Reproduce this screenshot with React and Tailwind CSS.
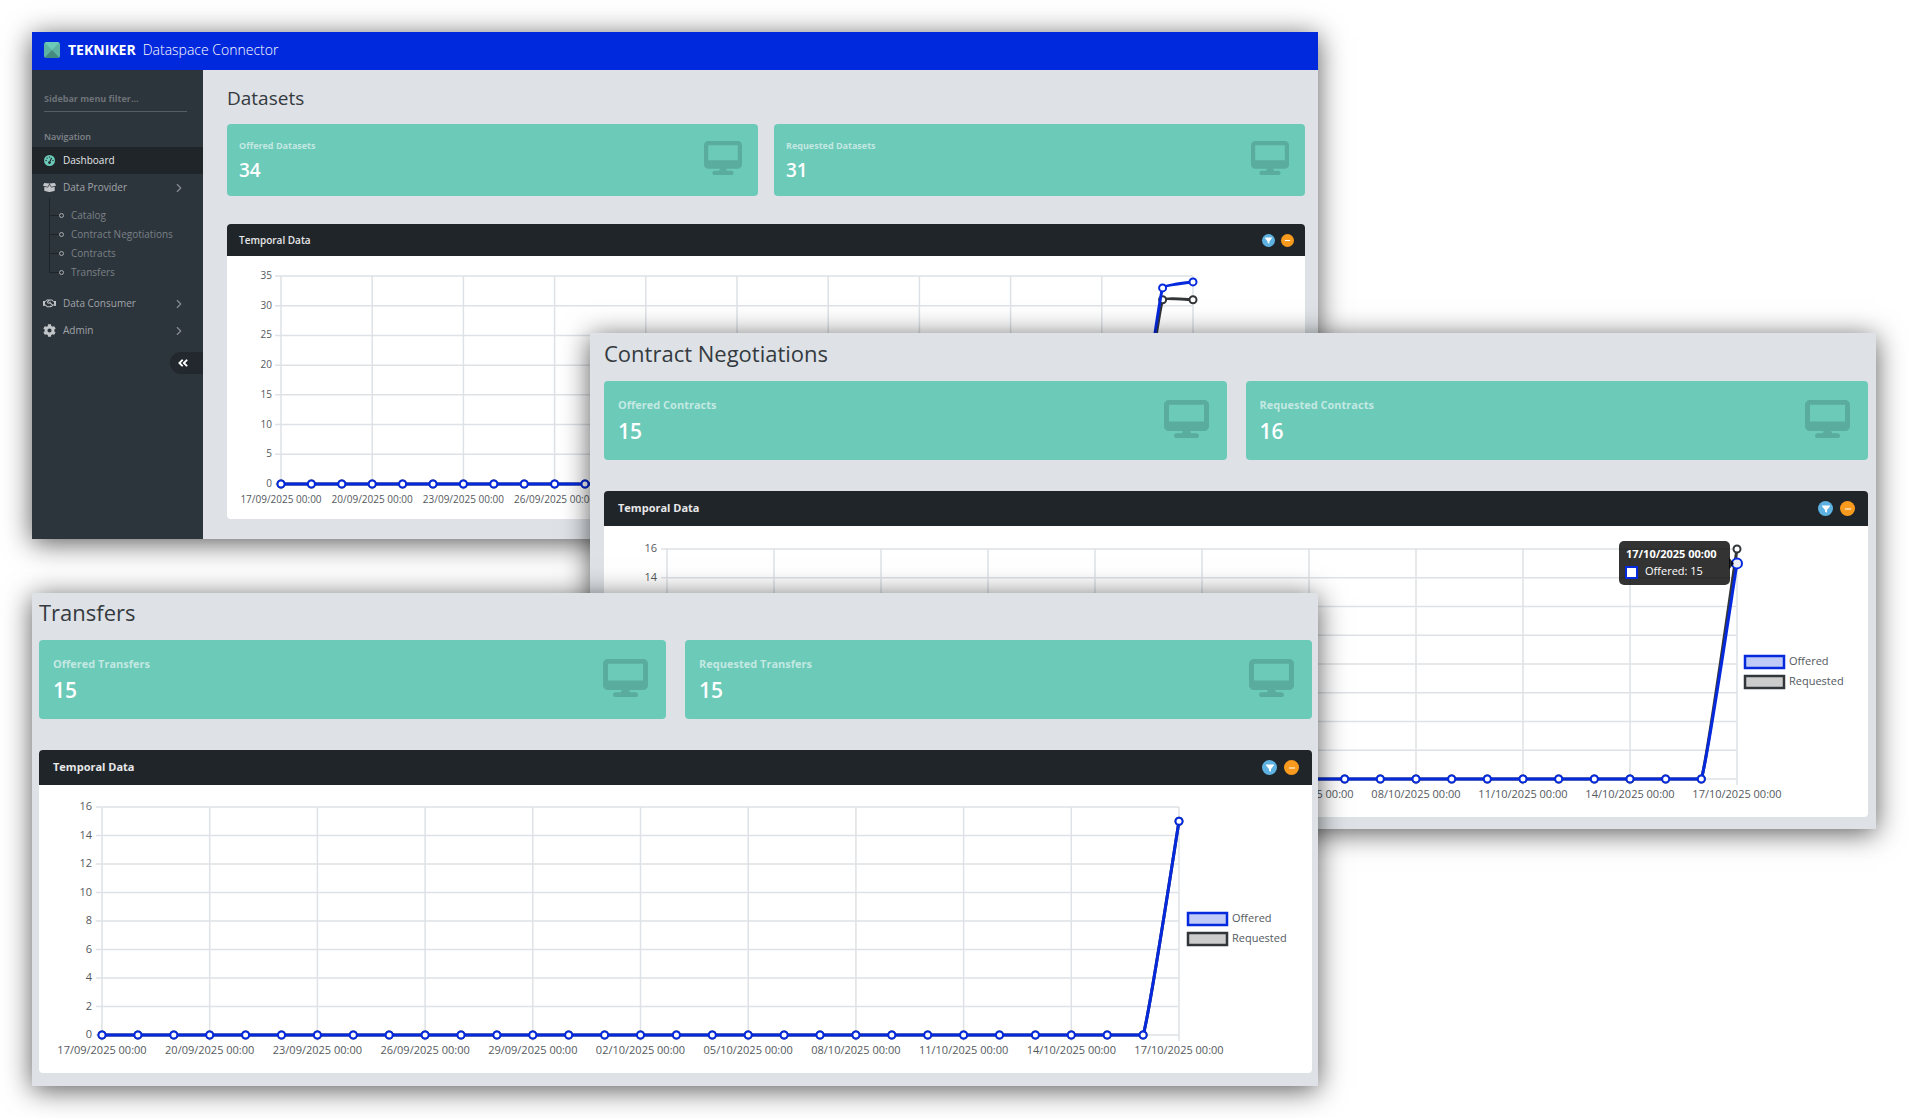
import React from "react";
import { FaCog, FaBoxOpen, FaRegHandshake, FaAngleDoubleLeft } from "react-icons/fa";
import { FaDesktop, FaFilter, FaGaugeHigh, FaMinus } from "react-icons/fa6";
import { ChevronRight } from "lucide-react";

const BLUE = "#0529dd";
const DARK = "#333639";

const DATES = [
  "17/09/2025 00:00",
  "20/09/2025 00:00",
  "23/09/2025 00:00",
  "26/09/2025 00:00",
  "29/09/2025 00:00",
  "02/10/2025 00:00",
  "05/10/2025 00:00",
  "08/10/2025 00:00",
  "11/10/2025 00:00",
  "14/10/2025 00:00",
  "17/10/2025 00:00",
];

const series = (...tail) => [...Array(31 - tail.length).fill(0), ...tail];

/* Smooth path through the points, with control points kept inside the plot. */
function splinePath(points, top, bottom) {
  const clamp = (y) => Math.min(bottom, Math.max(top, y));
  const ctrl = points.map((p, i) => {
    const prev = points[i - 1] || p;
    const next = points[i + 1] || p;
    const d1 = Math.hypot(p.x - prev.x, p.y - prev.y);
    const d2 = Math.hypot(next.x - p.x, next.y - p.y);
    const sum = d1 + d2 || 1;
    const a = (0.1 * d1) / sum;
    const b = (0.1 * d2) / sum;
    return {
      inX: p.x - a * (next.x - prev.x),
      inY: clamp(p.y - a * (next.y - prev.y)),
      outX: p.x + b * (next.x - prev.x),
      outY: clamp(p.y + b * (next.y - prev.y)),
    };
  });
  return points
    .map((p, i) =>
      i === 0
        ? `M${p.x} ${p.y}`
        : `C${ctrl[i - 1].outX} ${ctrl[i - 1].outY} ${ctrl[i].inX} ${ctrl[i].inY} ${p.x} ${p.y}`
    )
    .join("");
}

function Chart({ label, width, height, plot, max, step, font, offered, requested, legend, tooltip }) {
  const { left, right, top, bottom } = plot;
  const x = (i) => left + ((right - left) * i) / 30;
  const y = (v) => bottom - ((bottom - top) * v) / max;
  const ticks = Array.from({ length: max / step + 1 }, (_, i) => i * step);
  const lines = [
    { color: DARK, data: requested },
    { color: BLUE, data: offered },
  ].map((s) => ({ ...s, points: s.data.map((v, i) => ({ x: x(i), y: y(v) })) }));

  return (
    <svg viewBox={`0 0 ${width} ${height}`} role="img" aria-label={label} className="block h-auto w-full" fontSize={font} fill="#54595e">
      <g stroke="#dee2e6" strokeWidth="1.5">
        {ticks.map((t) => (
          <line key={t} x1={left - 6} x2={right} y1={y(t)} y2={y(t)} />
        ))}
        {DATES.map((d, i) => (
          <line key={d} x1={x(i * 3)} x2={x(i * 3)} y1={top} y2={bottom + 6} />
        ))}
      </g>
      {ticks.map((t) => (
        <text key={t} x={left - font + 1} y={y(t)} dy="0.3em" textAnchor="end">{t}</text>
      ))}
      {DATES.map((d, i) => (
        <text key={d} x={x(i * 3)} y={bottom + 15} dy="0.36em" textAnchor="middle">{d}</text>
      ))}
      {lines.map((s) => (
        <g key={s.color}>
          <path d={splinePath(s.points, top, bottom)} fill="none" stroke={s.color} strokeWidth="3" />
          {s.points.map((p, i) => (
            <circle key={i} cx={p.x} cy={p.y} r="3.5" fill="#fff" stroke={s.color} strokeWidth="2" />
          ))}
        </g>
      ))}
      {legend && (
        <g strokeWidth="2.5">
          <rect x={legend.x} y={legend.y - 6} width="39" height="12" fill="#c0caf7" stroke={BLUE} />
          <rect x={legend.x} y={legend.y + 14} width="39" height="12" fill="#cccccc" stroke={DARK} />
          <text x={legend.x + 44} y={legend.y} dy="0.3em" stroke="none">Offered</text>
          <text x={legend.x + 44} y={legend.y + 20} dy="0.3em" stroke="none">Requested</text>
        </g>
      )}
      {tooltip && (
        <g>
          <circle cx={right} cy={y(15)} r="5" fill="#eceef3" stroke={BLUE} strokeWidth="2" />
          <path d={`M${right - 8} ${y(15) - 6}l5 6l-5 6z`} fill="#000" fillOpacity="0.8" />
          <rect x={right - 118} y={top - 8} width="111" height="44" rx="5" fill="#000" fillOpacity="0.8" />
          <text x={right - 111} y={top + 9} fill="#fff" fontWeight="700">17/10/2025 00:00</text>
          <rect x={right - 111} y={top + 18} width="11" height="11" fill="#fff" stroke={BLUE} strokeWidth="2" />
          <text x={right - 92} y={top + 26} fill="#fff">Offered: 15</text>
        </g>
      )}
    </svg>
  );
}

function StatCard({ label, value, large }) {
  return (
    <div className={`flex items-center justify-between rounded bg-[#6ccab9] ${large ? "h-[79px] pr-[18px] pl-[14px]" : "h-[72px] pr-4 pl-3"}`}>
      <div className="flex flex-col gap-1">
        <div className={`font-bold text-white/60 ${large ? "text-[11px] leading-4" : "text-[9px] leading-4"}`}>{label}</div>
        <div className={`font-semibold text-white ${large ? "text-[21px] leading-7" : "text-[19px] leading-6"}`}>{value}</div>
      </div>
      <FaDesktop aria-hidden="true" preserveAspectRatio="none" className={`mb-1 text-[#5aac9e] ${large ? "h-[38px] w-[45px]" : "h-[34px] w-[38px]"}`} />
    </div>
  );
}

function Panel({ large, children }) {
  const button = large ? "size-[15px] text-[8px]" : "size-[13px] text-[7px]";
  return (
    <section className="overflow-hidden rounded bg-white">
      <header className={`flex items-center justify-between bg-[#20252a] ${large ? "h-[35px] pr-[13px] pl-[14px]" : "h-8 pr-[11px] pl-3"}`}>
        <h2 className={`text-white/90 ${large ? "text-[11px] font-bold" : "text-[10px] font-semibold"}`}>Temporal Data</h2>
        <div className={`flex ${large ? "gap-[7px]" : "gap-[6px]"}`}>
          <button type="button" aria-label="Filter" className={`grid place-items-center rounded-full bg-[#5eb2e2] text-white ${button}`}><FaFilter /></button>
          <button type="button" aria-label="Collapse" className={`grid place-items-center rounded-full bg-[#f89a1d] text-white ${button}`}><FaMinus /></button>
        </div>
      </header>
      {children}
    </section>
  );
}

function Section({ title, stats, large, children }) {
  return (
    <>
      <h1 className={`text-[#343a40] ${large ? "text-[22px] leading-7" : "text-[19px] leading-7"}`}>{title}</h1>
      <div className={`grid grid-cols-2 ${large ? "mt-[14px] mb-[31px] gap-[19px]" : "mt-3 mb-7 gap-4"}`}>
        {stats.map(([label, value]) => (
          <StatCard key={label} label={label} value={value} large={large} />
        ))}
      </div>
      <Panel large={large}>{children}</Panel>
    </>
  );
}

function NavLink({ icon: Icon, label, active, expandable }) {
  return (
    <a href="#" className={`flex h-[27px] items-center pr-[17px] ${active ? "bg-[#20252a] text-[#e4e6e8]" : "text-[#a0a4a9]"}`}>
      <span className="flex w-[31px] justify-center pl-1">
        <Icon aria-hidden="true" className={active ? "size-[11px] text-[#6ccab9]" : "size-[13px] text-[#c3c6c9]"} />
      </span>
      <span className="flex-1 whitespace-nowrap">{label}</span>
      {expandable && <ChevronRight aria-hidden="true" className="size-[14px] text-[#868c92]" />}
    </a>
  );
}

function Sidebar() {
  return (
    <aside className="w-[171px] shrink-0 bg-[#2d353c] text-[10px]">
      <div className="px-3 pt-4 pr-4">
        <input
          type="text"
          aria-label="Sidebar menu filter"
          placeholder="Sidebar menu filter..."
          className="h-[26px] w-full border-b border-[#575d63] bg-transparent text-[9px] font-bold outline-none placeholder:text-[#6c7278]"
        />
      </div>
      <div className="mt-[17px] mb-[2px] px-3 text-[9px] leading-4 font-semibold text-[#81868a]">Navigation</div>
      <nav>
        <NavLink icon={FaGaugeHigh} label="Dashboard" active />
        <NavLink icon={FaBoxOpen} label="Data Provider" expandable />
        <ul className="relative mt-[5px] mb-2 ml-[17px] before:absolute before:-top-2 before:bottom-[9px] before:w-px before:bg-[#1f2429]">
          {["Catalog", "Contract Negotiations", "Contracts", "Transfers"].map((item) => (
            <li key={item}>
              <a href="#" className="flex h-[19px] items-center whitespace-nowrap text-[#7a8086]">
                <span className="h-px w-[10px] bg-[#1f2429]" />
                <span className="mr-[7px] size-[5px] rounded-full border border-[#a8acb0]" />
                {item}
              </a>
            </li>
          ))}
        </ul>
        <NavLink icon={FaRegHandshake} label="Data Consumer" expandable />
        <NavLink icon={FaCog} label="Admin" expandable />
      </nav>
      <button type="button" aria-label="Minify sidebar" className="mt-2 ml-auto flex h-[22px] w-[33px] items-center rounded-l-full bg-[#22282d] pl-[7px] text-[12px] text-white">
        <FaAngleDoubleLeft />
      </button>
    </aside>
  );
}

const WINDOW = "absolute bg-[#dee2e6] shadow-[0_4px_26px_rgba(0,0,0,0.65)]";

export default function App() {
  return (
    <div className="relative min-h-screen overflow-hidden bg-white font-['Open_Sans','Noto_Sans',sans-serif]">
      <div className={`${WINDOW} top-8 right-[590px] left-8`}>
        <header className="flex h-[38px] items-center bg-[#0029dd] px-3 pb-[3px] text-[14px] text-white">
          <svg viewBox="0 0 16 16" aria-hidden="true" className="mr-2 size-4">
            <rect width="16" height="16" rx="2.5" fill="#5db3a3" />
            <path d="M1 0.7Q1.6 0 2.5 0h11q.9 0 1.5.7L8 8z" fill="#6ccab9" />
            <path d="M1 15.3L8 8l7 7.3q-.6.7-1.5.7h-11q-.9 0-1.5-.7z" fill="#458a7e" />
          </svg>
          <span className="mr-[7px] font-bold">TEKNIKER</span>
          <span className="font-light">Dataspace Connector</span>
        </header>
        <div className="flex">
          <Sidebar />
          <main className="min-w-0 flex-1 pt-[14px] pr-[13px] pb-5 pl-6">
            <Section title="Datasets" stats={[["Offered Datasets", 34], ["Requested Datasets", 31]]}>
              <Chart
                label="Datasets over time"
                width={1078} height={263}
                plot={{ left: 54, right: 966, top: 20, bottom: 228 }}
                max={35} step={5} font={10}
                offered={series(33, 34)} requested={series(31, 31)}
              />
            </Section>
          </main>
        </div>
      </div>

      <main className={`${WINDOW} top-[333px] right-8 left-[590px] pt-[6px] pr-2 pb-3 pl-[14px]`}>
        <Section large title="Contract Negotiations" stats={[["Offered Contracts", 15], ["Requested Contracts", 16]]}>
          <Chart
            label="Contract negotiations over time"
            width={1264} height={291}
            plot={{ left: 63, right: 1133, top: 23, bottom: 253 }}
            max={16} step={2} font={11}
            offered={series(15)} requested={series(16)}
            legend={{ x: 1141, y: 136 }} tooltip
          />
        </Section>
      </main>

      <main className={`${WINDOW} top-[593px] right-[590px] left-8 pt-[5px] pr-[6px] pb-[13px] pl-[7px]`}>
        <Section large title="Transfers" stats={[["Offered Transfers", 15], ["Requested Transfers", 15]]}>
          <Chart
            label="Transfers over time"
            width={1273} height={288}
            plot={{ left: 63, right: 1140, top: 22, bottom: 250 }}
            max={16} step={2} font={11}
            offered={series(15)} requested={series(15)}
            legend={{ x: 1149, y: 134 }}
          />
        </Section>
      </main>
    </div>
  );
}
